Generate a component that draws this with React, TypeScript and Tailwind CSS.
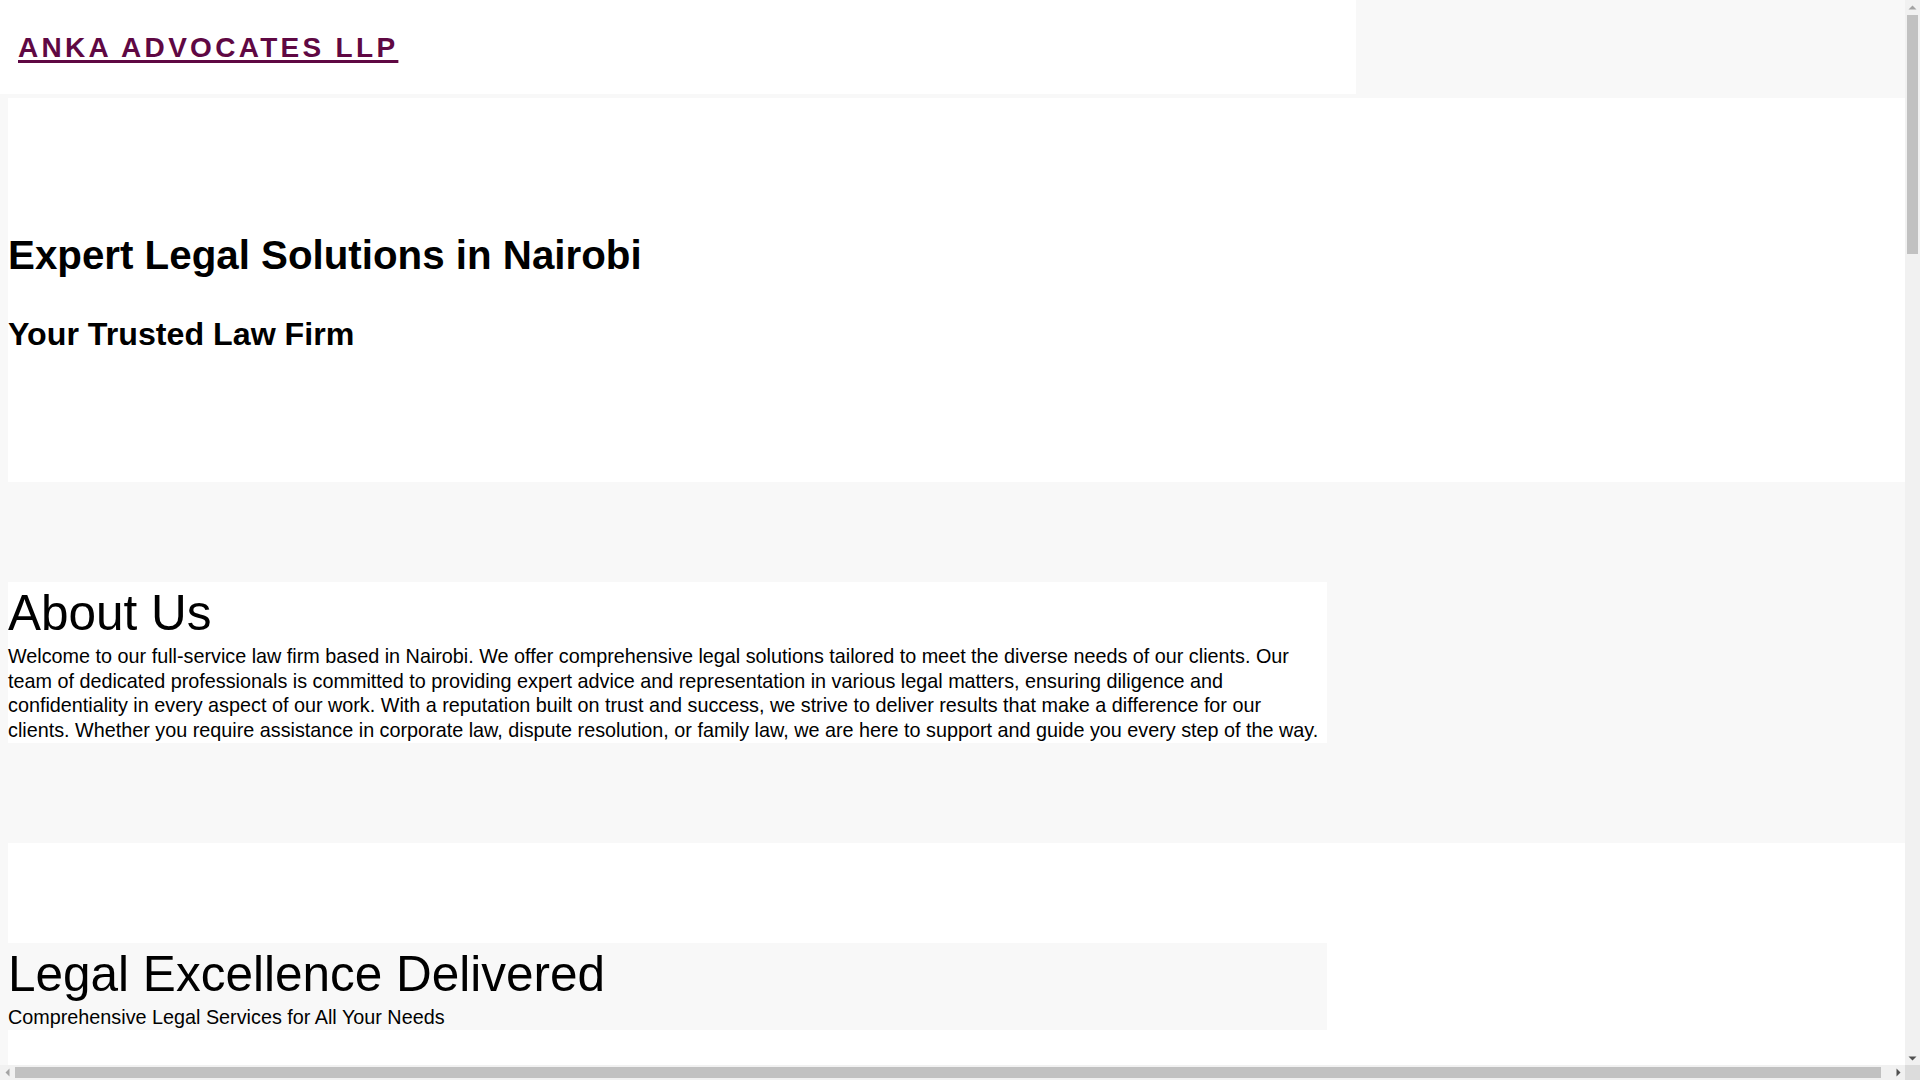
function Arrow({ dir, dark }: { dir: "up" | "down" | "left" | "right"; dark?: boolean }) {
  const pts = {
    up: "3.5,6.5 7.5,2.5 11.5,6.5",
    down: "3.5,3.5 7.5,7.5 11.5,3.5",
    left: "6.5,3.5 2.5,7.5 6.5,11.5",
    right: "3.5,3.5 7.5,7.5 3.5,11.5",
  }[dir];
  const vertical = dir === "up" || dir === "down";
  return (
    <svg
      width={vertical ? 15 : 10}
      height={vertical ? 10 : 15}
      viewBox={vertical ? "0 0 15 10" : "0 0 10 15"}
      className="block"
    >
      <polygon points={pts} fill={dark ? "#505050" : "#a3a3a3"} />
    </svg>
  );
}

// imitation of the browser's classic scrollbars shown in the screenshot
function Scrollbars() {
  return (
    <>
      <div className="fixed right-0 top-0 flex h-[1065px] w-[15px] flex-col bg-[#f1f1f1]">
        <div className="flex h-[15px] items-center justify-center">
          <Arrow dir="up" />
        </div>
        <div className="mx-[2px] h-[239px] bg-[#c1c1c1]" />
        <div className="flex-1" />
        <div className="flex h-[15px] items-center justify-center">
          <Arrow dir="down" dark />
        </div>
      </div>
      <div className="fixed bottom-0 left-0 flex h-[15px] w-[1905px] bg-[#f1f1f1]">
        <div className="flex w-[15px] items-center justify-center">
          <Arrow dir="left" />
        </div>
        <div className="my-[2px] w-[1866px] bg-[#c1c1c1]" />
        <div className="flex-1" />
        <div className="flex w-[15px] items-center justify-center">
          <Arrow dir="right" dark />
        </div>
      </div>
      <div className="fixed bottom-0 right-0 h-[15px] w-[15px] bg-[#dcdcdc]" />
    </>
  );
}

export default function App() {
  return (
    <div className="h-screen w-screen overflow-hidden bg-[#f8f8f8] font-['Liberation_Sans',Arial,sans-serif] text-black">
      <div className="flex h-full flex-col">
        <header className="h-[94px] w-[1356px] shrink-0 bg-white pl-[18px] pt-[32px]">
          <a
            href="#"
            className="text-[28px] font-bold leading-[32px] tracking-[3.3px] text-[#5f0843] underline decoration-[3px] underline-offset-[3px]"
          >
            ANKA ADVOCATES LLP
          </a>
        </header>

        <main className="ml-2 mt-[4px] flex w-full flex-1 flex-col">
          {/* hero */}
          <section className="bg-white pb-[129px] pt-[135px]">
            <h1 className="text-[40.3px] font-bold leading-[46px]">Expert Legal Solutions in Nairobi</h1>
            <h2 className="mt-[37px] text-[32.2px] font-bold leading-[37px]">Your Trusted Law Firm</h2>
          </section>

          {/* about */}
          <section className="py-[100px]">
            <div className="w-[1319px] bg-white">
              <h2 className="text-[49.5px] leading-[62px]">About Us</h2>
              <p className="text-[19.8px] leading-[24.7px]">
                Welcome to our full-service law firm based in Nairobi. We offer comprehensive legal solutions tailored
                to meet the diverse needs of our clients. Our team of dedicated professionals is committed to providing
                expert advice and representation in various legal matters, ensuring diligence and confidentiality in
                every aspect of our work. With a reputation built on trust and success, we strive to deliver results
                that make a difference for our clients. Whether you require assistance in corporate law, dispute
                resolution, or family law, we are here to support and guide you every step of the way.
              </p>
            </div>
          </section>

          {/* services */}
          <section className="flex-1 bg-white pt-[100px]">
            <div className="w-[1319px] bg-[#f8f8f8]">
              <h2 className="text-[49.5px] leading-[61px]">Legal Excellence Delivered</h2>
              <p className="text-[19.8px] leading-[26px]">Comprehensive Legal Services for All Your Needs</p>
            </div>
          </section>
        </main>
      </div>
      <Scrollbars />
    </div>
  );
}
